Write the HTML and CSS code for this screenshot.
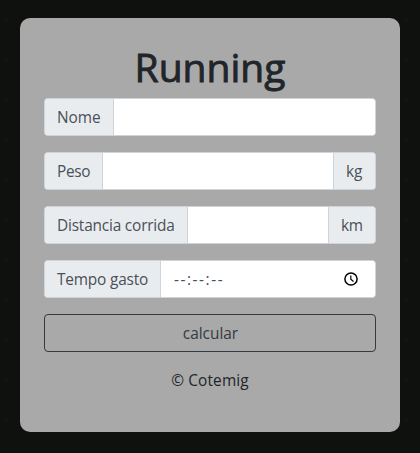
FILE: index.html
```html
<!DOCTYPE html>
<html lang="pt-BR">
<head>
<meta charset="utf-8">
<title>Running</title>
<link rel="stylesheet" href="styles.css">
</head>
<body>
<main class="card">
  <h1 class="title">Running</h1>
  <form class="form">
    <div class="group"><label class="addon nome" for="nome">Nome</label><input class="field" id="nome" type="text"></div>
    <div class="group"><label class="addon peso" for="peso">Peso</label><input class="field" id="peso" type="text"><span class="addon unit kg">kg</span></div>
    <div class="group"><label class="addon distancia" for="dist">Distancia corrida</label><input class="field" id="dist" type="text"><span class="addon unit km">km</span></div>
    <div class="group"><span class="addon tempo">Tempo gasto</span>
      <div class="field time"><span class="time-value">--:--:--</span>
        <svg class="clock" viewBox="0 0 14 14" fill="none" stroke="#000"><circle cx="7" cy="7" r="6.1" stroke-width="1.5"/><path d="M6.8 3.5v3.8l2.7 2.2" stroke-width="1.2"/></svg>
      </div>
    </div>
    <button class="submit" type="button">calcular</button>
  </form>
  <footer class="footer">© Cotemig</footer>
</main>
</body>
</html>
```
FILE: styles.css
```css
* { box-sizing: border-box; }

body {
  margin: 0;
  height: 453px;
  padding: 18px 20px 21px;
  overflow: hidden;
  background-color: #0f110e;
  background-image: conic-gradient(from 90deg at 18px 18px, #0d1828 90deg, transparent 0);
  background-size: 20px 20px;
  background-position: 7px 1px;
  color: #212529;
  font: 15.4px/24px "Open Sans", "Noto Sans", sans-serif;
}

.card {
  height: 414px;
  padding: 24px;
  border-radius: 10px;
  background: #a9a9a9;
}

.title {
  margin: 0 0 8px;
  padding-top: 1px;
  height: 48px;
  font-size: 39px;
  font-weight: 400;
  line-height: 48px;
  -webkit-text-stroke: 0.9px #212529;
  text-align: center;
}

.form {
  display: flex;
  flex-direction: column;
  gap: 16px;
}

.group {
  display: flex;
  height: 38px;
  border: 1px solid #ced4da;
  border-radius: 4px;
  background: #fff;
  overflow: hidden;
}

.addon {
  flex: none;
  padding: 7px 0 5px 12px;
  border-right: 1px solid #ced4da;
  background: #e9ecef;
  color: #495057;
  white-space: nowrap;
}

.nome { width: 69px; }
.peso { width: 58px; letter-spacing: -0.3px; }
.distancia { width: 143px; letter-spacing: -0.18px; }
.tempo { width: 116px; letter-spacing: -0.18px; }
.unit { border-right: 0; border-left: 1px solid #ced4da; }
.kg { width: 42px; }
.km { width: 47px; letter-spacing: -0.3px; }

.field {
  flex: 1;
  min-width: 0;
  border: 0;
  padding: 6px 12px;
  background: #fff;
  outline: 0;
}

.time {
  display: flex;
  align-items: center;
  justify-content: space-between;
  padding: 0 17px 0 13px;
  color: #495057;
}

.time-value {
  padding-top: 2px;
  letter-spacing: 1.55px;
}

.clock { width: 14px; height: 14px; }

.submit {
  height: 38px;
  padding: 2px 0 0 1px;
  border: 1px solid #343a40;
  border-radius: 4px;
  background: transparent;
  color: #343a40;
  font: inherit;
}

.footer {
  margin-top: 17px;
  letter-spacing: 0.15px;
  text-align: center;
}
```
